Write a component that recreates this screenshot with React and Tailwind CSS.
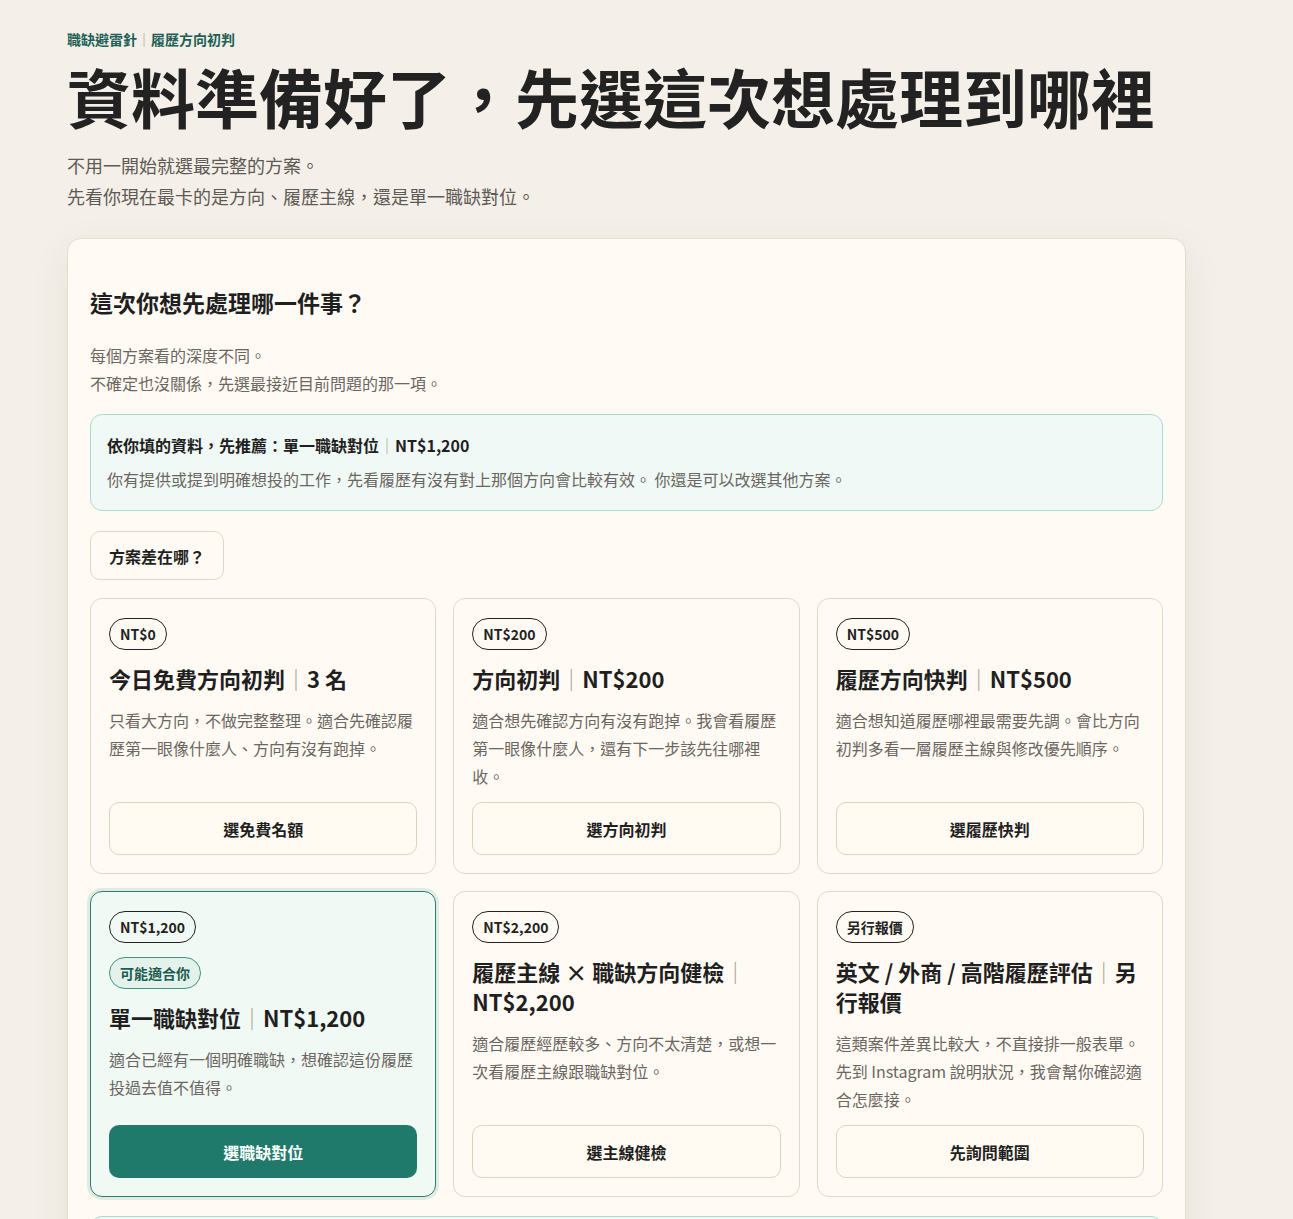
import { useState } from 'react'

const plans = [
  {
    id: 'free',
    badge: 'NT$0',
    name: '今日免費方向初判',
    price: '3 名',
    desc: '只看大方向，不做完整整理。適合先確認履歷第一眼像什麼人、方向有沒有跑掉。',
    cta: '選免費名額',
  },
  {
    id: 'direction',
    badge: 'NT$200',
    name: '方向初判',
    price: 'NT$200',
    desc: '適合想先確認方向有沒有跑掉。我會看履歷第一眼像什麼人，還有下一步該先往哪裡收。',
    cta: '選方向初判',
  },
  {
    id: 'quick',
    badge: 'NT$500',
    name: '履歷方向快判',
    price: 'NT$500',
    desc: '適合想知道履歷哪裡最需要先調。會比方向初判多看一層履歷主線與修改優先順序。',
    cta: '選履歷快判',
  },
  {
    id: 'match',
    badge: 'NT$1,200',
    name: '單一職缺對位',
    price: 'NT$1,200',
    desc: '適合已經有一個明確職缺，想確認這份履歷投過去值不值得。',
    cta: '選職缺對位',
    fit: true,
  },
  {
    id: 'full',
    badge: 'NT$2,200',
    name: '履歷主線 × 職缺方向健檢',
    price: 'NT$2,200',
    desc: '適合履歷經歷較多、方向不太清楚，或想一次看履歷主線跟職缺對位。',
    cta: '選主線健檢',
  },
  {
    id: 'quote',
    badge: '另行報價',
    name: '英文 / 外商 / 高階履歷評估',
    price: '另行報價',
    desc: '這類案件差異比較大，不直接排一般表單。先到 Instagram 說明狀況，我會幫你確認適合怎麼接。',
    cta: '先詢問範圍',
  },
]

function PlanCard({ plan, selected, onSelect }) {
  const active = plan.fit
  return (
    <div
      className={`flex flex-col rounded-[12px] border px-[18px] pt-[19px] pb-[18px] ${
        active
          ? 'border-[#2a7d6f] bg-[#f1f9f5] shadow-[0_0_0_3px_#e1ebe4]'
          : 'border-[#e4d8c5] bg-[#fffbf4]'
      }`}
    >
      <div>
        <span className="inline-flex h-[32px] items-center rounded-full border border-[#222] px-[10px] text-[14px] font-bold text-[#222]">
          {plan.badge}
        </span>
      </div>
      {plan.fit && (
        <div className="mt-[14px]">
          <span className="inline-flex h-[32px] items-center rounded-full border border-[#3d9582] bg-[#e4f2ec] px-[10px] text-[14px] font-bold text-[#1d5b50]">
            可能適合你
          </span>
        </div>
      )}
      <h3 className="mt-[13px] text-[22px] font-bold leading-[30px] text-[#1f1f1f]">
        {plan.name}
        <span className="font-normal text-[#a89c8a]">｜</span>
        {plan.price}
      </h3>
      <p className="mt-[13px] mb-[12px] text-[16px] leading-[28px] text-[#6b6661]">{plan.desc}</p>
      <button
        onClick={() => onSelect(plan.id)}
        className={`mt-auto h-[53px] w-full rounded-[10px] text-[16px] font-bold ${
          active
            ? 'bg-[#1f7a6c] text-white'
            : 'border border-[#e0d3bf] bg-[#fffaf2] text-[#1f1f1f]'
        } ${selected ? 'outline-2 outline-[#1f7a6c]' : ''}`}
      >
        {plan.cta}
      </button>
    </div>
  )
}

export default function App() {
  const [picked, setPicked] = useState(null)

  return (
    <div
      className="min-h-screen bg-[#f4f0e9] px-[67px] pt-[29px] pb-[60px] text-[#222]"
      style={{ fontFamily: '"Noto Sans CJK TC", "Noto Sans", sans-serif' }}
    >
      <div className="text-[14px] font-bold leading-[21px] text-[#1e5f55]">
        職缺避雷針<span className="font-normal text-[#a89c8a]">｜</span>履歷方向初判
      </div>
      <h1 className="mt-[8px] text-[64px] font-bold leading-[74px] text-[#222]">
        資料準備好了，先選這次想處理到哪裡
      </h1>
      <div className="mt-[18px] text-[18px] leading-[31px] text-[#5e5954]">
        <p>不用一開始就選最完整的方案。</p>
        <p>先看你現在最卡的是方向、履歷主線，還是單一職缺對位。</p>
      </div>

      <section className="mt-[26px] w-[1119px] rounded-[14px] border border-[#e6dcca] bg-[#fffbf4] px-[22px] pt-[47px] pb-[40px] shadow-[0_12px_40px_rgba(60,45,20,0.07)]">
        <h2 className="text-[23px] font-bold leading-[32px] text-[#1f1f1f]">這次你想先處理哪一件事？</h2>
        <div className="mt-[23px] text-[16px] leading-[28px] text-[#6b6661]">
          <p>每個方案看的深度不同。</p>
          <p>不確定也沒關係，先選最接近目前問題的那一項。</p>
        </div>

        <div className="mt-[17px] rounded-[12px] border border-[#a9dccc] bg-[#f1f9f6] px-[16px] pt-[18px] pb-[17px]">
          <p className="text-[16px] font-bold leading-[24px] text-[#1f1f1f]">
            依你填的資料，先推薦：單一職缺對位<span className="font-normal text-[#a89c8a]">｜</span>NT$1,200
          </p>
          <p className="mt-[8px] text-[16px] leading-[28px] text-[#6b6661]">
            你有提供或提到明確想投的工作，先看履歷有沒有對上那個方向會比較有效。 你還是可以改選其他方案。
          </p>
        </div>

        <button className="mt-[20px] h-[49px] rounded-[10px] border border-[#e3d6c2] bg-[#fffbf4] px-[18px] text-[16px] font-bold text-[#1f1f1f]">
          方案差在哪？
        </button>

        <div className="mt-[18px] grid grid-cols-3 gap-[17px]">
          {plans.map((p) => (
            <PlanCard key={p.id} plan={p} selected={picked === p.id} onSelect={setPicked} />
          ))}
        </div>

        <div className="mt-[19px] rounded-[12px] border border-[#a9dccc] bg-[#f1f9f6] px-[16px] py-[18px]">
          <p className="text-[16px] font-bold leading-[24px] text-[#1f1f1f]">選好之後</p>
          <p className="mt-[8px] text-[16px] leading-[28px] text-[#6b6661]">
            送出後我會依你選的方案安排時間，並用 Instagram 回覆你下一步。
          </p>
        </div>
      </section>
    </div>
  )
}
